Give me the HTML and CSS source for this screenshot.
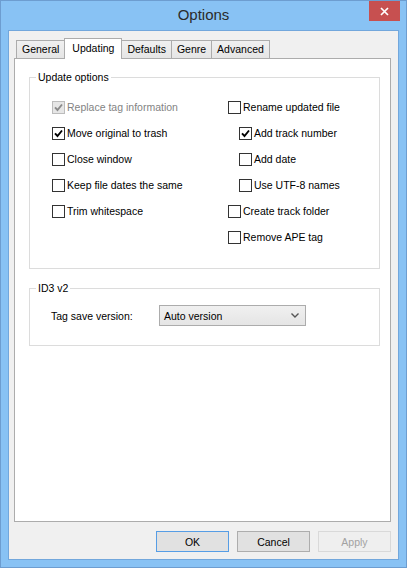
FILE: index.html
```html
<!DOCTYPE html>
<html lang="en">
<head>
  <meta charset="UTF-8">
  <title>Options</title>
  <link rel="stylesheet" href="styles.css">
</head>
<body>
  <div class="window">
    <!-- Title bar -->
    <div class="titlebar">
      <span></span>
      <span class="title">Options</span>
      <button class="close" aria-label="Close">
        <svg width="9" height="9" viewBox="0 0 9 9"><path d="M1 1 L8 8 M8 1 L1 8" stroke="#fff" stroke-width="1.7" fill="none"/></svg>
      </button>
    </div>

    <div class="client">
      <div class="tabs">
        <div class="tab">General</div>
        <div class="tab active">Updating</div>
        <div class="tab">Defaults</div>
        <div class="tab">Genre</div>
        <div class="tab">Advanced</div>
      </div>

      <div class="panel">
        <fieldset class="group">
          <legend>Update options</legend>
          <div class="options">
            <div class="col">
              <div class="check disabled"><span class="box"><svg class="tick" width="9" height="9" viewBox="0 0 9 9"><path d="M1 4.3 L3.5 7 L8 1.5"/></svg></span>Replace tag information</div>
              <div class="check"><span class="box"><svg class="tick" width="9" height="9" viewBox="0 0 9 9"><path d="M1 4.3 L3.5 7 L8 1.5"/></svg></span>Move original to trash</div>
              <div class="check"><span class="box"></span>Close window</div>
              <div class="check"><span class="box"></span>Keep file dates the same</div>
              <div class="check"><span class="box"></span>Trim whitespace</div>
            </div>
            <div class="col">
              <div class="check"><span class="box"></span>Rename updated file</div>
              <div class="check indent"><span class="box"><svg class="tick" width="9" height="9" viewBox="0 0 9 9"><path d="M1 4.3 L3.5 7 L8 1.5"/></svg></span>Add track number</div>
              <div class="check indent"><span class="box"></span>Add date</div>
              <div class="check indent"><span class="box"></span>Use UTF-8 names</div>
              <div class="check"><span class="box"></span>Create track folder</div>
              <div class="check"><span class="box"></span>Remove APE tag</div>
            </div>
          </div>
        </fieldset>

        <fieldset class="group group-id3">
          <legend>ID3 v2</legend>
          <div class="field">
            <span class="field-label">Tag save version:</span>
            <div class="select">
              <span>Auto version</span>
              <svg width="8" height="5" viewBox="0 0 8 5"><path d="M0.5 0.5 L4 4 L7.5 0.5" stroke="#555" stroke-width="1.4" fill="none"/></svg>
            </div>
          </div>
        </fieldset>
      </div>

      <div class="buttons">
        <button class="btn btn-default">OK</button>
        <button class="btn">Cancel</button>
        <button class="btn" disabled>Apply</button>
      </div>
    </div>
  </div>
</body>
</html>
```

FILE: styles.css
```css
body {
  margin: 0;
  font-family: "Liberation Sans", Arial, sans-serif;
  font-size: 10.5px;
  color: #000;
}

.window {
  width: 407px;
  height: 568px;
  box-sizing: border-box;
  border: 1px solid #6d9dd0;
  background-color: #88c2f4;
  display: flex;
  flex-direction: column;
}

/* Title bar */
.titlebar {
  height: 29px;
  display: grid;
  grid-template-columns: 1fr auto 1fr;
  align-items: start;
}

.title {
  font-size: 15px;
  line-height: 28px;
  color: #2b2b2b;
}

.close {
  justify-self: end;
  margin-right: 6px;
  width: 31px;
  height: 20px;
  padding: 0;
  border: none;
  background-color: #c75050;
  display: flex;
  align-items: center;
  justify-content: center;
}

/* Client area */
.client {
  flex: 1;
  margin: 0 7px 7px;
  border: 1px solid #72a7dc;
  background-color: #f0f0f0;
  display: flex;
  flex-direction: column;
  padding: 7px 7px 7px 5px;
}

.tabs {
  display: flex;
  align-items: flex-end;
  height: 20px;
  padding-left: 2px;
}

.tab {
  height: 18px;
  box-sizing: border-box;
  padding: 0 5px;
  border: 1px solid #acacac;
  border-bottom: none;
  margin-right: -1px;
  background: linear-gradient(#f0f0f0, #e5e5e5);
  line-height: 17px;
}

.tab.active {
  height: 21px;
  padding: 0 7px;
  margin-bottom: -1px;
  background: #fff;
  line-height: 19px;
  position: relative;
  z-index: 1;
}

.panel {
  flex: 1;
  background-color: #fff;
  border: 1px solid #acacac;
  padding: 12px 10px 0 14px;
}

/* Group boxes */
.group {
  margin: 0;
  padding: 0;
  min-width: 0;
  border: 1px solid #dcdcdc;
}

.group legend {
  margin-left: 6px;
  padding: 0 2px;
  line-height: 13px;
}

.group-id3 {
  margin-top: 13px;
}

.options {
  display: grid;
  grid-template-columns: 176px auto;
  padding: 10px 0 18px 22px;
}

.col {
  display: flex;
  flex-direction: column;
}

.check {
  height: 26px;
  display: flex;
  align-items: center;
  gap: 2px;
}

.check.indent {
  padding-left: 11px;
}

.box {
  width: 13px;
  height: 13px;
  box-sizing: border-box;
  border: 1px solid #333;
  background-color: #fff;
  display: flex;
  align-items: center;
  justify-content: center;
}

.tick path {
  fill: none;
  stroke: #000;
  stroke-width: 1.9;
}

.check.disabled {
  color: #838383;
}

.check.disabled .box {
  border-color: #bcbcbc;
  background-color: #e6e6e6;
}

.check.disabled .tick path {
  stroke: #8a8a8a;
}

.field {
  display: flex;
  align-items: center;
  padding: 10px 0 19px 21px;
}

.field-label {
  width: 108px;
}

.select {
  width: 147px;
  height: 21px;
  box-sizing: border-box;
  border: 1px solid #acacac;
  background: linear-gradient(#f0f0f0, #e5e5e5);
  display: flex;
  align-items: center;
  justify-content: space-between;
  padding: 0 6px 0 4px;
}

/* Dialog buttons */
.buttons {
  display: flex;
  justify-content: flex-end;
  gap: 8px;
  margin-top: 9px;
}

.btn {
  width: 73px;
  height: 21px;
  padding: 0;
  font: inherit;
  color: #000;
  border: 1px solid #adadad;
  background-color: #e1e1e1;
}

.btn-default {
  border-color: #569de5;
}

.btn:disabled {
  color: #a2a2a2;
  border-color: #d9d9d9;
  background-color: #efefef;
}
```
